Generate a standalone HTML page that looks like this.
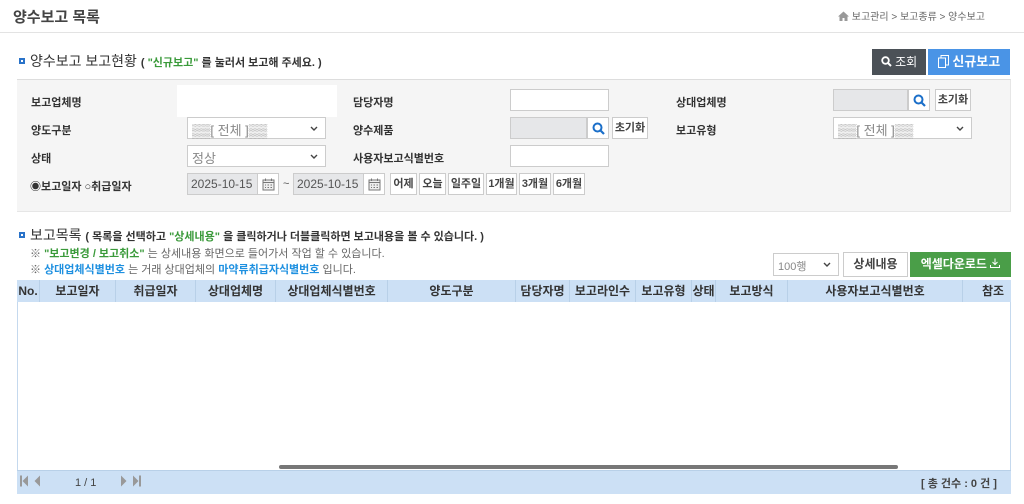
<!DOCTYPE html>
<html><head><meta charset="utf-8"><style>
*{margin:0;padding:0;box-sizing:border-box}
body{width:1024px;height:504px;background:#fff;font-family:"Liberation Sans","Noto Sans CJK KR",sans-serif;color:#333;position:relative;overflow:hidden;font-size:11px}
.a{position:absolute}
.lbl{position:absolute;font-size:11px;font-weight:bold;color:#333}
.inp{position:absolute;background:#fff;border:1px solid #ccc;height:22px}
.gray{background:#e6e7e9}
.sel{position:absolute;background:#fff;border:1px solid #ccc;height:22px;font-size:13px;color:#888;padding:2px 0 0 4px}
.sel svg{position:absolute;right:7px;top:8px}
.btn{position:absolute;background:#fff;border:1px solid #ccc;height:22px;font-size:11px;font-weight:bold;text-align:center;line-height:20px;color:#444}
.sb{position:absolute;background:#fff;border:1px solid #ccc;height:22px;width:22px}
.sb svg{position:absolute;left:4px;top:4px}
.col{position:absolute;top:0;height:22px;line-height:22px;text-align:center;font-size:12px;font-weight:bold;color:#333;border-right:1px solid #b8d0e8}
</style></head><body>
<div class="a" style="left:13px;top:6px;font-size:15px;font-weight:bold;color:#444">양수보고 목록</div>
<div class="a" style="left:838px;top:8px;font-size:10px;color:#666"><svg width="11" height="10" viewBox="0 0 11 10" style="vertical-align:-1px"><path d="M0 5.5L5.5 0.5L11 5.5H9.5V10H6.5V7H4.5V10H1.5V5.5Z" fill="#999"/></svg> 보고관리 &gt; 보고종류 &gt; 양수보고</div>
<div class="a" style="left:0;top:32px;width:1024px;height:1px;background:#e3e3e3"></div>

<div class="a" style="left:19px;top:58px;width:6px;height:6px;border:2px solid #2a73c9"></div>
<div class="a" style="left:30px;top:51px;font-size:14px;color:#333">양수보고 보고현황 <span style="font-size:11px;font-weight:bold">( <span style="color:#3a9a3a">"신규보고"</span> 를 눌러서 보고해 주세요. )</span></div>
<div class="a" style="left:872px;top:49px;width:54px;height:26px;background:#4b5157;color:#fff;font-size:12px;text-align:center;line-height:26px"><svg width="11" height="11" viewBox="0 0 11 11" style="vertical-align:-1px"><circle cx="4.5" cy="4.5" r="3.3" fill="none" stroke="#fff" stroke-width="1.8"/><path d="M7 7L10 10" stroke="#fff" stroke-width="2"/></svg> 조회</div>
<div class="a" style="left:928px;top:49px;width:82px;height:26px;background:#4a94e6;color:#fff;font-size:13px;font-weight:bold;text-align:center;line-height:26px"><svg width="11" height="13" viewBox="0 0 11 13" style="vertical-align:-2px"><rect x="0.5" y="3" width="7" height="9.5" fill="none" stroke="#fff"/><path d="M3 3V0.5H10.5V10H7.5" fill="none" stroke="#fff"/></svg> 신규보고</div>

<div class="a" style="left:17px;top:79px;width:994px;height:133px;background:#f5f5f5;border-top:1px solid #ddd;border-bottom:1px solid #e6e6e6;border-right:1px solid #e6e6e6"></div>
<div class="lbl" style="left:31px;top:94px">보고업체명</div>
<div class="a" style="left:177px;top:85px;width:160px;height:32px;background:#fff"></div>
<div class="lbl" style="left:353px;top:94px">담당자명</div>
<div class="inp" style="left:510px;top:89px;width:99px"></div>
<div class="lbl" style="left:676px;top:94px">상대업체명</div>
<div class="inp gray" style="left:833px;top:89px;width:75px"></div>
<div class="sb" style="left:908px;top:89px"><svg width="13" height="13" viewBox="0 0 13 13"><circle cx="5.5" cy="5.5" r="4" fill="none" stroke="#1b6fc9" stroke-width="2"/><path d="M8.5 8.5L12 12" stroke="#1b6fc9" stroke-width="2.2"/></svg></div>
<div class="btn" style="left:935px;top:89px;width:36px">초기화</div>

<div class="lbl" style="left:31px;top:122px">양도구분</div>
<div class="sel" style="left:187px;top:117px;width:139px">▒▒[ 전체 ]▒▒<svg width="8" height="5" viewBox="0 0 8 5"><path d="M1 1L4 4L7 1" fill="none" stroke="#444" stroke-width="1.4"/></svg></div>
<div class="lbl" style="left:353px;top:122px">양수제품</div>
<div class="inp gray" style="left:510px;top:117px;width:77px"></div>
<div class="sb" style="left:587px;top:117px"><svg width="13" height="13" viewBox="0 0 13 13"><circle cx="5.5" cy="5.5" r="4" fill="none" stroke="#1b6fc9" stroke-width="2"/><path d="M8.5 8.5L12 12" stroke="#1b6fc9" stroke-width="2.2"/></svg></div>
<div class="btn" style="left:612px;top:117px;width:36px">초기화</div>
<div class="lbl" style="left:676px;top:122px">보고유형</div>
<div class="sel" style="left:833px;top:117px;width:139px">▒▒[ 전체 ]▒▒<svg width="8" height="5" viewBox="0 0 8 5"><path d="M1 1L4 4L7 1" fill="none" stroke="#444" stroke-width="1.4"/></svg></div>

<div class="lbl" style="left:31px;top:150px">상태</div>
<div class="sel" style="left:187px;top:145px;width:139px">정상<svg width="8" height="5" viewBox="0 0 8 5"><path d="M1 1L4 4L7 1" fill="none" stroke="#444" stroke-width="1.4"/></svg></div>
<div class="lbl" style="left:353px;top:150px">사용자보고식별번호</div>
<div class="inp" style="left:510px;top:145px;width:99px"></div>

<div class="lbl" style="left:30px;top:178px">◉보고일자 ○취급일자</div>
<div class="inp gray" style="left:187px;top:173px;width:70px;font-size:12px;color:#555;padding:3px 0 0 3px;border-right:none">2025-10-15</div>
<div class="sb" style="left:257px;top:173px"><svg width="13" height="13" viewBox="0 0 13 13"><rect x="1" y="2" width="11" height="10" fill="#eee" stroke="#777"/><path d="M1 4.5H12M3 7H4M5.5 7H7M8.5 7H10M3 9.5H4M5.5 9.5H7M8.5 9.5H10M3.5 0.5V3M9.5 0.5V3" stroke="#777"/></svg></div>
<div class="a" style="left:283px;top:178px;color:#555">~</div>
<div class="inp gray" style="left:293px;top:173px;width:70px;font-size:12px;color:#555;padding:3px 0 0 3px;border-right:none">2025-10-15</div>
<div class="sb" style="left:363px;top:173px"><svg width="13" height="13" viewBox="0 0 13 13"><rect x="1" y="2" width="11" height="10" fill="#eee" stroke="#777"/><path d="M1 4.5H12M3 7H4M5.5 7H7M8.5 7H10M3 9.5H4M5.5 9.5H7M8.5 9.5H10M3.5 0.5V3M9.5 0.5V3" stroke="#777"/></svg></div>
<div class="btn" style="left:390px;top:173px;width:27px">어제</div>
<div class="btn" style="left:419px;top:173px;width:27px">오늘</div>
<div class="btn" style="left:448px;top:173px;width:36px">일주일</div>
<div class="btn" style="left:486px;top:173px;width:31px">1개월</div>
<div class="btn" style="left:519px;top:173px;width:32px">3개월</div>
<div class="btn" style="left:553px;top:173px;width:32px">6개월</div>

<div class="a" style="left:19px;top:232px;width:6px;height:6px;border:2px solid #2a73c9"></div>
<div class="a" style="left:30px;top:225px;font-size:14px;color:#333">보고목록 <span style="font-size:11px;font-weight:bold">( 목록을 선택하고 <span style="color:#3a9a3a">"상세내용"</span> 을 클릭하거나 더블클릭하면 보고내용을 볼 수 있습니다. )</span></div>
<div class="a" style="left:30px;top:245px;font-size:11px;color:#666">※ <b style="color:#3a9a3a">"보고변경 / 보고취소"</b> 는 상세내용 화면으로 들어가서 작업 할 수 있습니다.</div>
<div class="a" style="left:30px;top:261px;font-size:11px;color:#666">※ <b style="color:#1e90e0">상대업체식별번호</b> 는 거래 상대업체의 <b style="color:#1e90e0">마약류취급자식별번호</b> 입니다.</div>

<div class="sel" style="left:773px;top:253px;width:66px;height:23px;font-size:11px;padding-top:4px">100행<svg width="8" height="5" viewBox="0 0 8 5"><path d="M1 1L4 4L7 1" fill="none" stroke="#444" stroke-width="1.4"/></svg></div>
<div class="btn" style="left:843px;top:252px;width:65px;height:25px;line-height:23px;font-size:12px">상세내용</div>
<div class="a" style="left:910px;top:252px;width:101px;height:25px;background:#4a9e48;color:#fff;font-size:12px;font-weight:bold;text-align:center;line-height:25px">엑셀다운로드 <svg width="10" height="10" viewBox="0 0 10 10"><path d="M5 0.5V6.5M2.5 4L5 6.5L7.5 4M0.5 7V9.5H9.5V7" fill="none" stroke="#fff"/></svg></div>

<div class="a" style="left:17px;top:280px;width:994px;height:214px;border:1px solid #c5d9ee"></div>
<div class="a" style="left:17px;top:280px;width:994px;height:22px;background:#cce0f5;overflow:hidden">
<div class="col" style="left:0;width:23px">No.</div>
<div class="col" style="left:23px;width:76px">보고일자</div>
<div class="col" style="left:99px;width:80px">취급일자</div>
<div class="col" style="left:179px;width:80px">상대업체명</div>
<div class="col" style="left:259px;width:112px">상대업체식별번호</div>
<div class="col" style="left:371px;width:128px">양도구분</div>
<div class="col" style="left:499px;width:54px">담당자명</div>
<div class="col" style="left:553px;width:66px">보고라인수</div>
<div class="col" style="left:619px;width:56px">보고유형</div>
<div class="col" style="left:675px;width:24px">상태</div>
<div class="col" style="left:699px;width:72px">보고방식</div>
<div class="col" style="left:771px;width:175px">사용자보고식별번호</div>
<div class="col" style="left:946px;width:60px;border:none">참조</div>
</div>
<div class="a" style="left:279px;top:465px;width:619px;height:4px;background:#777;border-radius:2px"></div>
<div class="a" style="left:17px;top:470px;width:994px;height:24px;background:#cce0f5;border-top:1px solid #b8d0e8"></div>
<svg class="a" style="left:20px;top:475px" width="30" height="12" viewBox="0 0 30 12"><rect x="0" y="0.5" width="2" height="11" fill="#999"/><path d="M8 0.5V11.5L2.5 6Z M20 0.5V11.5L14.5 6Z" fill="#999"/></svg>
<div class="a" style="left:75px;top:477px;font-size:11px;color:#444">1 / 1</div>
<svg class="a" style="left:121px;top:475px" width="30" height="12" viewBox="0 0 30 12"><path d="M0 0.5V11.5L5.5 6Z M12 0.5V11.5L17.5 6Z" fill="#999"/><rect x="18" y="0.5" width="2" height="11" fill="#999"/></svg>
<div class="a" style="left:921px;top:475px;font-size:11px;font-weight:bold;color:#444">[ 총 건수 : 0 건 ]</div>
</body></html>
